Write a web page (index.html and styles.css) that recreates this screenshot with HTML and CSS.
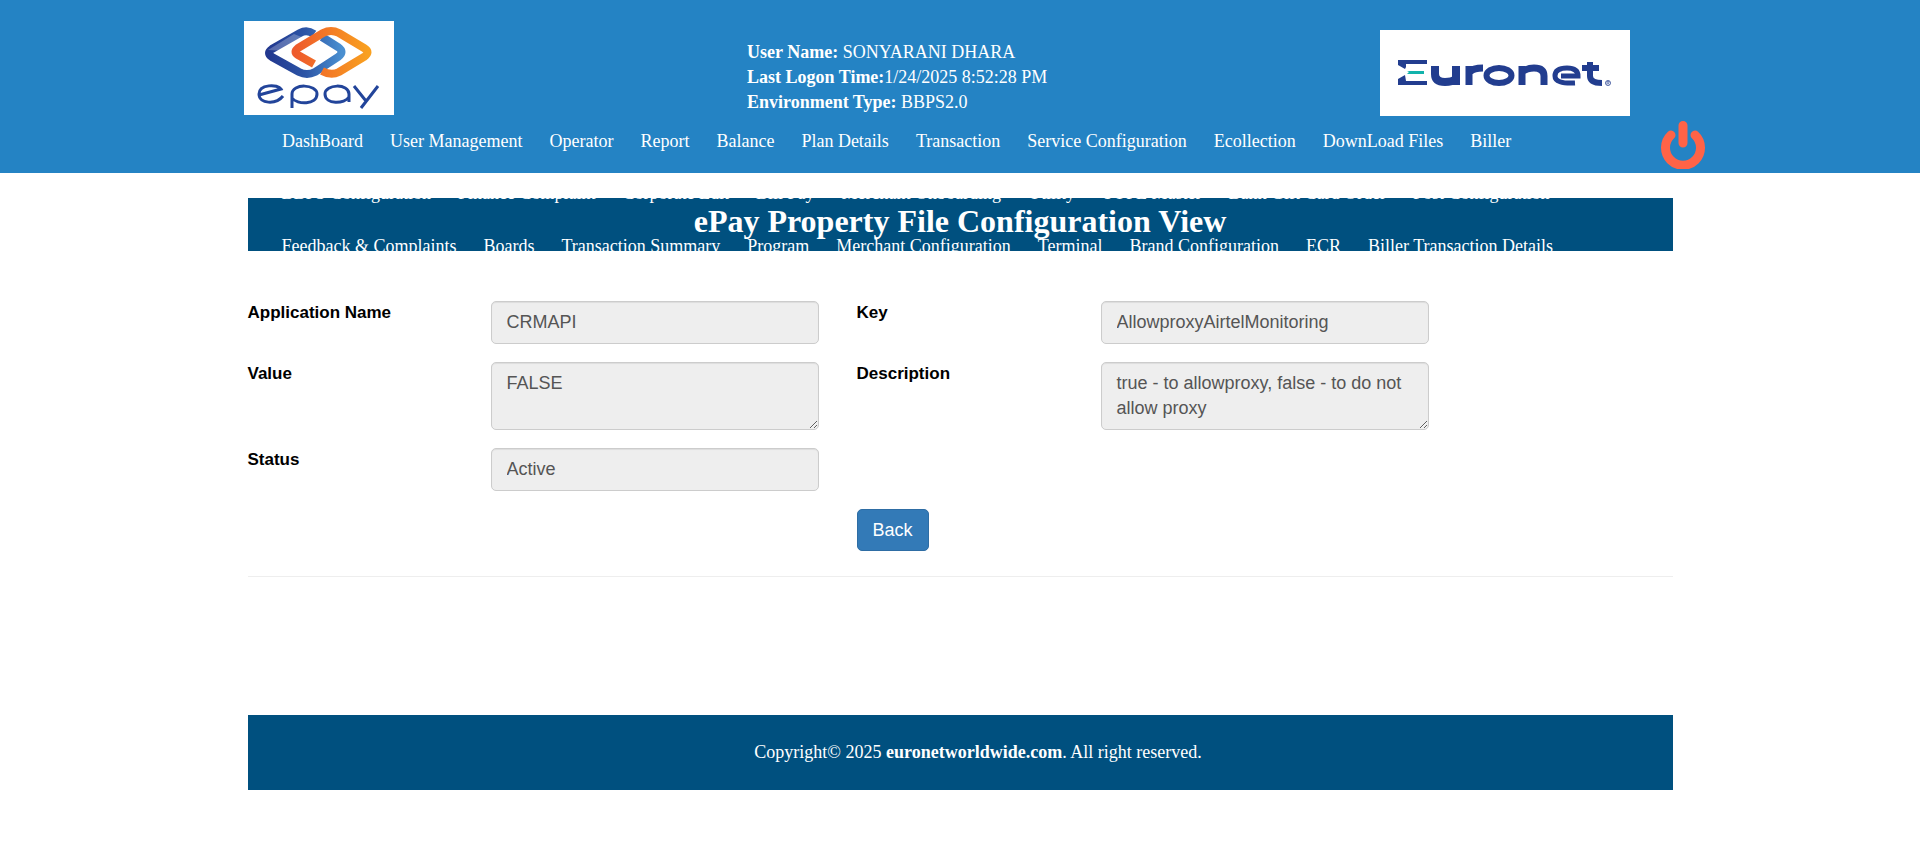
FILE: index.html
```html
<!DOCTYPE html>
<html lang="en">
<head>
<meta charset="utf-8">
<title>ePay Property File Configuration View</title>
<link rel="stylesheet" href="styles.css">
</head>
<body>
<header class="site-header">
  <div class="brand-row">
    <svg class="logo-epay" viewBox="0 0 150 94" role="img" aria-label="epay">
      <defs>
        <linearGradient id="blue" x1="0" y1="0" x2="1" y2="0"><stop offset="0" stop-color="#22388f"/><stop offset=".5" stop-color="#2c55a6"/><stop offset="1" stop-color="#4a8fd0"/></linearGradient>
        <linearGradient id="orange" x1="0" y1="0" x2="1" y2="0"><stop offset="0" stop-color="#ee5a2c"/><stop offset="1" stop-color="#f9a01f"/></linearGradient>
      </defs>
      <rect width="150" height="94" fill="#fff"/>
      <g fill="none" stroke-width="8">
        <path d="M70 13 Q63 8 56 12 L28 28 Q22 32 28 36 L55 51 Q63 55 71 51 L94 36 Q101 31 94 26 L78 16" stroke="url(#blue)"/>
        <path d="M70 43 L54 34 Q49 31 54 27 L79 12 Q87 8 95 12 L120 27 Q127 31 120 36 L95 51 Q87 55 78 50" stroke="url(#orange)"/>
      </g>
      <path d="M24 29L50 13L60 17L42 30Z" fill="#fff" opacity=".25"/>
      <g fill="none" stroke="#22449a" stroke-width="3">
        <path d="M15 74 L37 68 C34 63 15 63 15 73 C15 83 32 84 39 75"/>
        <path d="M48 87 V73 C48 62 73 63 73 73 C73 84 53 84 48 77"/>
        <path d="M105 81 V73 C105 62 81 63 81 73 C81 84 101 83 105 76"/>
        <path d="M110 65 L122 80 M134 65 L117 87"/>
      </g>
    </svg>
    <div class="session">
      <div><b>User Name:</b> SONYARANI DHARA</div>
      <div><b>Last Logon Time:</b>1/24/2025 8:52:28 PM</div>
      <div><b>Environment Type:</b> BBPS2.0</div>
    </div>
    <svg class="logo-euronet" viewBox="0 0 250 86" role="img" aria-label="Euronet">
      <rect width="250" height="86" fill="#fff"/>
      <path d="M18 30H47V34H26V37L25 39L18 35ZM18 55V49L25 45L26 51H47V55Z" fill="#223d8f"/>
      <path d="M27 41H44V44H27L29 42Z" fill="#12b3ac"/>
      <g fill="none" stroke="#223d8f">
        <path d="M55 36V44Q55 52 65 52Q72 52 76 49M76 36V55" stroke-width="8"/>
        <path d="M89 55V36M90 42Q93 38 103 38" stroke-width="7"/>
        <ellipse cx="119" cy="45.500" rx="12.500" ry="7.500" stroke-width="6"/>
        <path d="M142 55V36M142 42Q147 38 154 38Q164 38 164 46V55" stroke-width="7"/>
        <path d="M181 46H198Q198 38 187 38Q175 38 175 46Q175 54 195 53" stroke-width="5"/>
        <path d="M210 32V46Q210 53 222 53M202 38H219" stroke-width="6"/>
        <circle cx="228" cy="53" r="2.500" stroke-width=".8"/>
        <path d="M227 54.500V51.500H229V53H227M228 53L229 54.500" stroke-width=".5"/>
      </g>
    </svg>
  </div>
  <div class="nav-row">
    <nav class="menu">
      <ul class="menu-line">
        <li><a href="#">DashBoard</a></li><li><a href="#">User Management</a></li><li><a href="#">Operator</a></li><li><a href="#">Report</a></li><li><a href="#">Balance</a></li><li><a href="#">Plan Details</a></li><li><a href="#">Transaction</a></li><li><a href="#">Service Configuration</a></li><li><a href="#">Ecollection</a></li><li><a href="#">DownLoad Files</a></li><li><a href="#">Biller</a></li>
      </ul>
    </nav>
    <a class="power" href="#" aria-label="Log out">
      <svg viewBox="0 0 44 48"><path d="M10 14A17.500 17.500 0 1 0 34 14M22 4.500V22" fill="none" stroke="#ff6347" stroke-width="9" stroke-linecap="round"/></svg>
    </a>
  </div>
</header>

<main class="container">
  <div class="title-bar">
    <ul class="menu-line menu-upper">
      <li><a href="#">BBPS Configuration</a></li><li><a href="#">Finance Complaint</a></li><li><a href="#">Corporate Edit</a></li><li><a href="#">Bill Pay</a></li><li><a href="#">Merchant Onboarding</a></li><li><a href="#">Utility</a></li><li><a href="#">TUPE Master</a></li><li><a href="#">Bank Gift Card Order</a></li><li><a href="#">Post Configuration</a></li>
    </ul>
    <h1>ePay Property File Configuration View</h1>
    <ul class="menu-line menu-lower">
      <li><a href="#">Feedback &amp; Complaints</a></li><li><a href="#">Boards</a></li><li><a href="#">Transaction Summary</a></li><li><a href="#">Program</a></li><li><a href="#">Merchant Configuration</a></li><li><a href="#">Terminal</a></li><li><a href="#">Brand Configuration</a></li><li><a href="#">ECR</a></li><li><a href="#">Biller Transaction Details</a></li>
    </ul>
  </div>

  <form class="form">
    <label for="app">Application Name</label>
    <input id="app" class="control" type="text" value="CRMAPI" readonly>
    <label class="second" for="key">Key</label>
    <input id="key" class="control" type="text" value="AllowproxyAirtelMonitoring" readonly>
    <label for="val">Value</label>
    <textarea id="val" class="control" rows="2" readonly>FALSE</textarea>
    <label class="second" for="desc">Description</label>
    <textarea id="desc" class="control" rows="2" readonly>true - to allowproxy, false - to do not allow proxy</textarea>
    <label for="status">Status</label>
    <input id="status" class="control" type="text" value="Active" readonly>
    <div class="actions"><button class="btn" type="button">Back</button></div>
  </form>
  <hr class="rule">
  <footer class="footer">Copyright© 2025 <b>euronetworldwide.com</b>. All right reserved.</footer>
</main>
</body>
</html>
```
FILE: styles.css
```css
* { box-sizing: border-box; }

body {
  margin: 0;
  background: #fff;
  color: #000;
  font: 18px/25px "Liberation Serif", "Times New Roman", serif;
}

a { color: inherit; text-decoration: none; }

.site-header {
  padding: 21px 215px 4px 244px;
  background: #2483c4;
  color: #fff;
}

.brand-row {
  display: grid;
  grid-template-columns: 503px 1fr 250px;
  align-items: start;
  padding-right: 75px;
}

.logo-epay { display: block; width: 150px; height: 94px; }
.logo-euronet { display: block; width: 250px; height: 86px; margin-top: 9px; }
.session { padding-top: 19px; }

.nav-row {
  display: flex;
  justify-content: space-between;
  align-items: flex-start;
  padding-left: 38px;
}

.menu { padding-top: 13px; }

.menu-line {
  display: flex;
  gap: 27px;
  margin: 0;
  padding: 0;
  list-style: none;
  white-space: nowrap;
}

.power { padding-top: 5px; }
.power svg { display: block; width: 44px; height: 48px; }

.container {
  max-width: 1425px;
  margin: 25px auto 0;
}

.title-bar {
  position: relative;
  overflow: hidden;
  background: #00507f;
  color: #fff;
}

.title-bar h1 {
  margin: 0;
  padding: 5px 0 12px;
  font-size: 32px;
  line-height: 36px;
  text-align: center;
}

.menu-upper, .menu-lower { position: absolute; left: 34px; }
.menu-upper { top: -17px; }
.menu-lower { top: 36px; }

.form {
  display: grid;
  grid-template-columns: 243px 328px 282px 328px;
  row-gap: 18px;
  align-items: start;
  padding-top: 50px;
  font-family: "Liberation Sans", Arial, sans-serif;
}

.form label {
  font-size: 17px;
  font-weight: 700;
  line-height: 24px;
}

.form .second { padding-left: 38px; }

.control {
  display: block;
  width: 100%;
  height: 43px;
  margin: 0;
  padding: 8px 15px;
  border: 1px solid #ccc;
  border-radius: 5px;
  background: #eee;
  box-shadow: inset 0 1px 1px rgba(0, 0, 0, .075);
  color: #555;
  font: 18px/25px "Liberation Sans", Arial, sans-serif;
}

textarea.control { height: 68px; resize: vertical; }

.actions {
  grid-column: 3 / -1;
  grid-row: 4;
  padding-left: 38px;
}

.btn {
  display: block;
  padding: 8px 15px;
  border: 1px solid #2e6da4;
  border-radius: 5px;
  background: #337ab7;
  color: #fff;
  font: 18px/24px "Liberation Sans", Arial, sans-serif;
}

.rule {
  margin: 25px 0 138px;
  border: 0;
  border-top: 1px solid #eee;
}

.footer {
  padding: 25px 0 25px 36px;
  background: #00507f;
  color: #fff;
  text-align: center;
}
```
